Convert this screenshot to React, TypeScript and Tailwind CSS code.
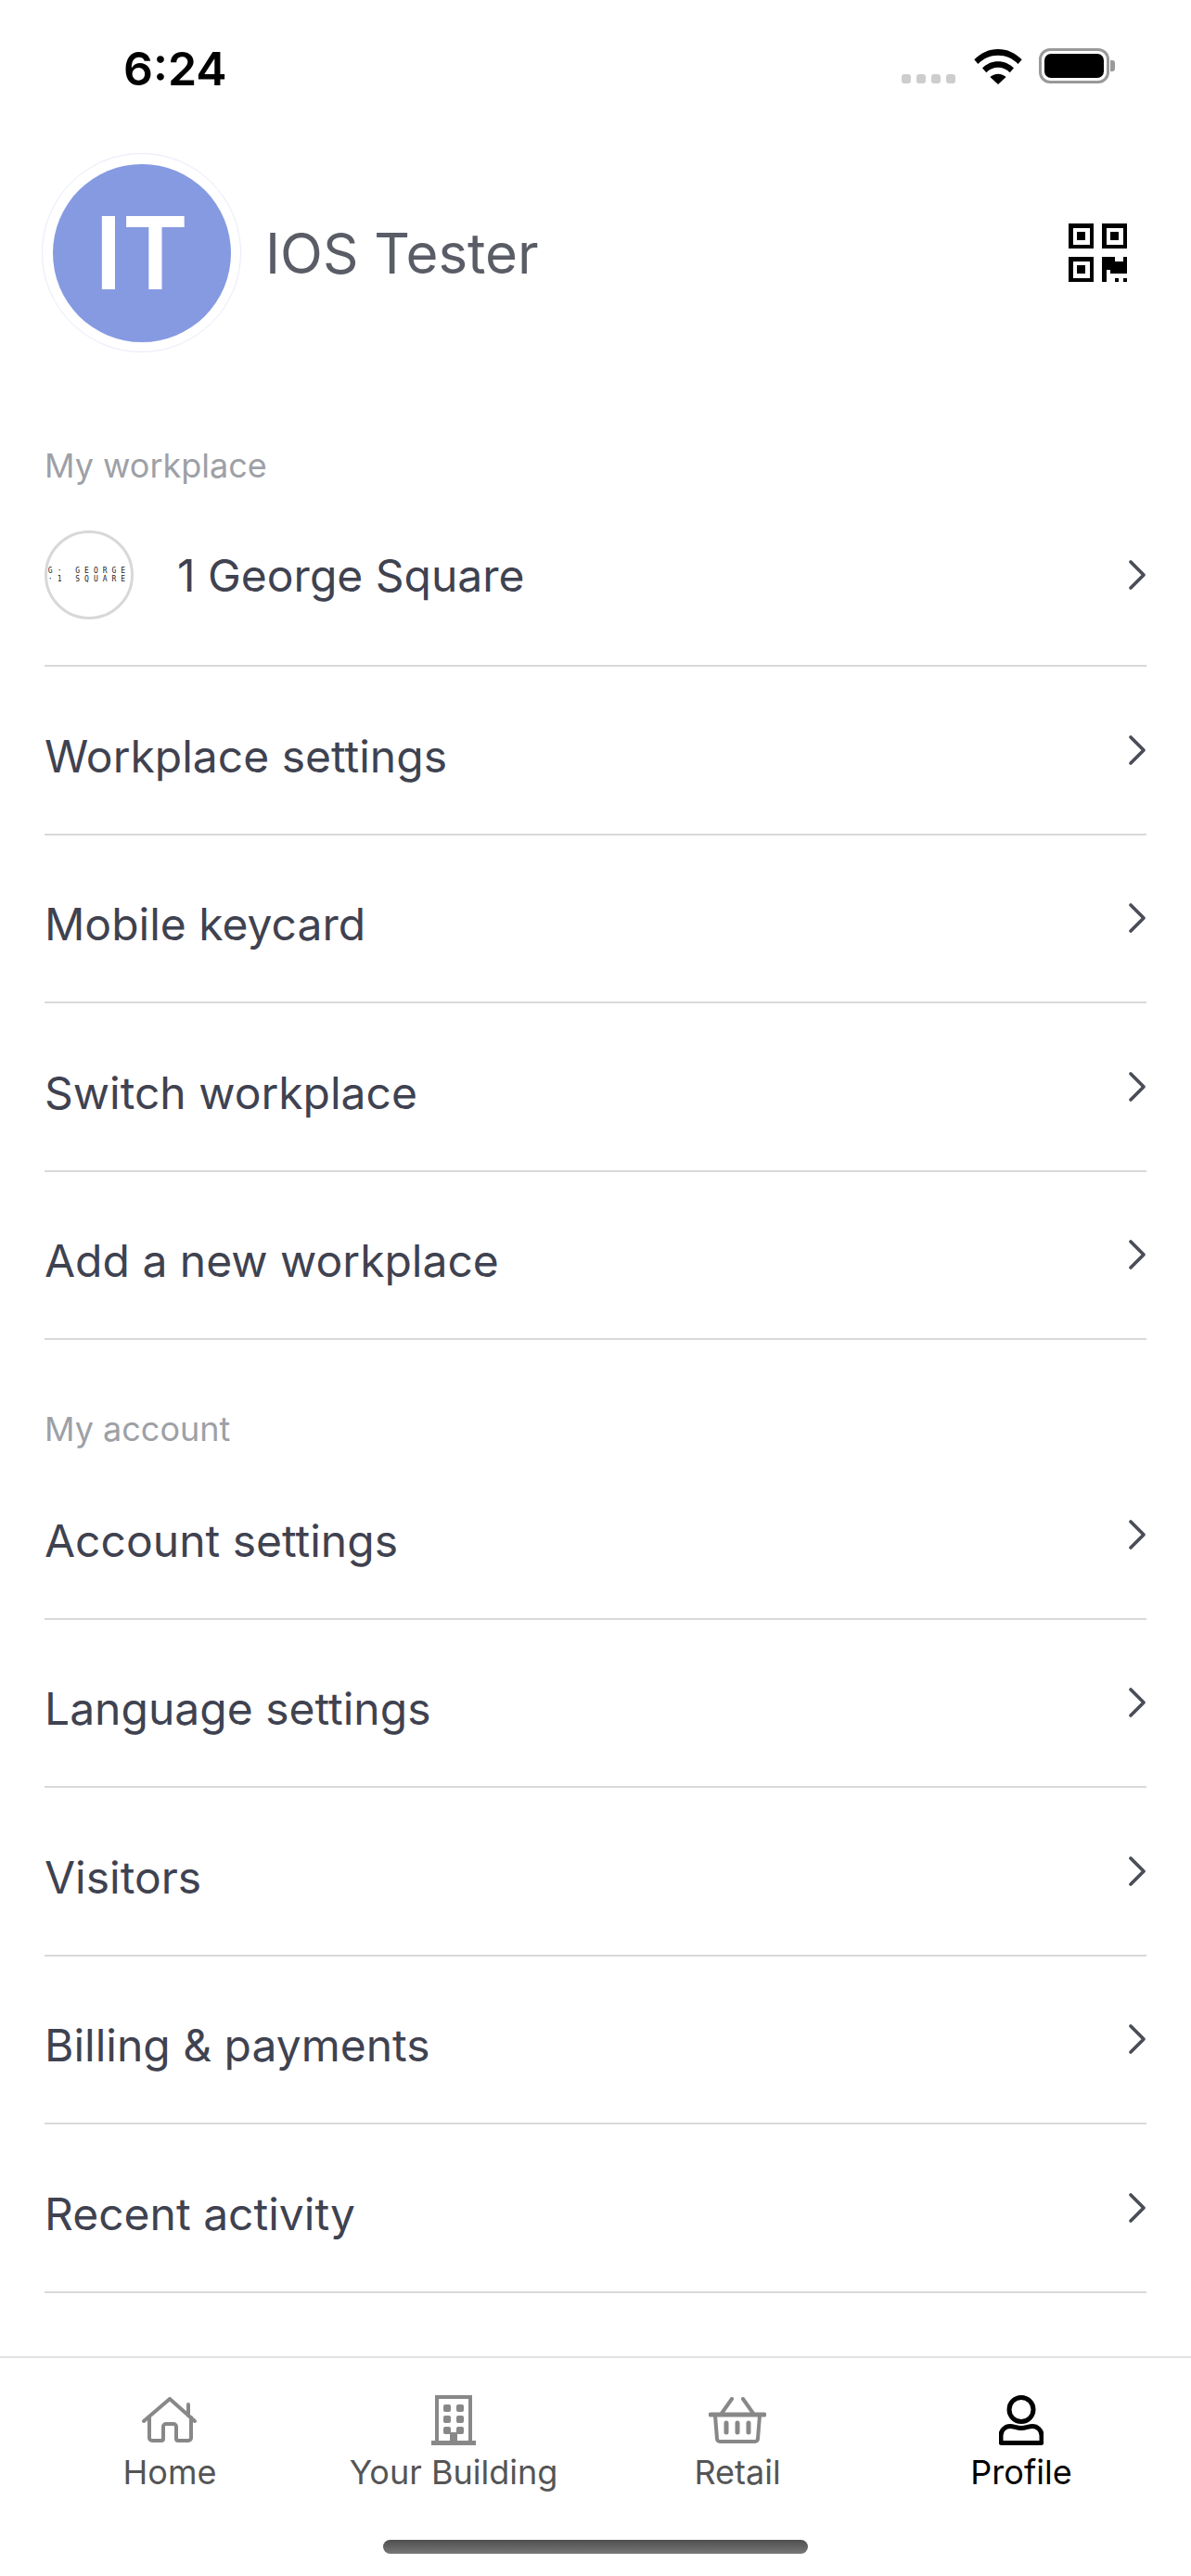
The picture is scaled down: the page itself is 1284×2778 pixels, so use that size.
import { ChevronRight } from 'lucide-react';

const workplaceRows = ['Workplace settings', 'Mobile keycard', 'Switch workplace', 'Add a new workplace'];
const accountRows = ['Account settings', 'Language settings', 'Visitors', 'Billing & payments', 'Recent activity'];

function Row({ label }: { label: string }) {
  return (
    <div className="flex h-[181.5px] items-center justify-between border-b-2 border-[#d9d9d9]">
      <span className="pt-[14px] text-[48px] leading-[60px] text-[#3f4250]">{label}</span>
      <ChevronRight className="-mr-[18px] h-[56px] w-[56px] text-[#4b4e58]" strokeWidth={1.6} />
    </div>
  );
}

function QrIcon() {
  return (
    <svg viewBox="0 0 14 14" className="h-[63px] w-[63px]" fill="#000" shapeRendering="crispEdges">
      <path fillRule="evenodd" d="M0 0h6v6H0zM1 1v4h4V1zM2 2h2v2H2z" />
      <path fillRule="evenodd" d="M8 0h6v6H8zM9 1v4h4V1zM10 2h2v2h-2z" />
      <path fillRule="evenodd" d="M0 8h6v6H0zM1 9v4h4V9zM2 10h2v2H2z" />
      <path d="M8 8h3v1h2V8h1v4h-4v-1H9v3H8z" />
      <path d="M11 13h1v1h-1zM13 13h1v1h-1z" />
    </svg>
  );
}

function StatusBar() {
  return (
    <div className="flex h-[120px] items-start justify-between pl-[133px] pr-[82px] pt-[52px]">
      <span className="text-[50px] leading-[44px] font-semibold text-black">6:24</span>
      <div className="flex items-start">
        <div className="mt-[28px] flex gap-[6px]">
          <div className="h-[10px] w-[10px] rounded-[3px] bg-[#cdcdcd]" />
          <div className="h-[10px] w-[10px] rounded-[3px] bg-[#cdcdcd]" />
          <div className="h-[10px] w-[10px] rounded-[3px] bg-[#cdcdcd]" />
          <div className="h-[10px] w-[10px] rounded-[3px] bg-[#cdcdcd]" />
        </div>
        <svg viewBox="0 0 50 37" className="ml-[20px] mt-[1px] h-[38px] w-[52px]" fill="#000">
          <path d="M25 0C15.500 0 7 3.800 0 11l4 4.500C10 9.500 17 6.500 25 6.500s15 3 21 9l4-4.500C43 3.800 34.500 0 25 0z" />
          <path d="M25 13c-6.300 0-12 2.500-16.500 7l4.200 4.500c3.300-3.300 7.600-5.200 12.300-5.200s9 1.900 12.300 5.200l4.200-4.500C37 15.500 31.300 13 25 13z" />
          <path d="M25 26c-3.300 0-6.200 1.300-8.400 3.300L25 37l8.400-7.700C31.200 27.300 28.300 26 25 26z" />
        </svg>
        <div className="ml-[18px] flex items-center">
          <div className="h-[38px] w-[76px] rounded-[12px] border-[3px] border-[#999999] p-[3px]">
            <div className="h-full w-full rounded-[7px] bg-black" />
          </div>
          <div className="ml-[1px] h-[12px] w-[5px] rounded-r-[3px] bg-[#999999]" />
        </div>
      </div>
    </div>
  );
}

function TabItem({ label, active, children }: { label: string; active?: boolean; children: React.ReactNode }) {
  return (
    <div className="flex flex-col items-center">
      <div className="flex h-[56px] items-center justify-center">{children}</div>
      <span className={`mt-[6px] text-[36px] leading-[44px] ${active ? 'text-black' : 'text-[#555555]'}`}>{label}</span>
    </div>
  );
}

export default function App() {
  return (
    <div className="flex h-[2778px] w-[1284px] flex-col overflow-hidden bg-white font-['Inter',sans-serif]">
      <StatusBar />
      <div className="flex items-center justify-between pl-[45px] pr-[69px] pt-[45px]">
        <div className="flex items-center">
          <div className="flex h-[215px] w-[215px] items-center justify-center rounded-full border border-[#e8ebfa]">
            <div className="flex h-[192px] w-[192px] items-center justify-center rounded-full bg-[#869ae2] text-[108px] font-semibold text-white">
              IT
            </div>
          </div>
          <span className="ml-[26px] text-[60px] leading-[72px] text-[#5a5d66]">IOS Tester</span>
        </div>
        <QrIcon />
      </div>

      <div className="px-[48px]">
        <div className="mt-[100px] text-[36px] leading-[44px] text-[#9ea0a6]">My workplace</div>
        <div className="flex h-[195px] items-center justify-between border-b-2 border-[#d9d9d9] pb-[2px]">
          <div className="flex items-center">
            <div className="flex h-[96px] w-[96px] flex-col items-center justify-center overflow-hidden rounded-full border-[3px] border-[#d8d8d8] font-['DejaVu_Sans_Mono',monospace] text-[8px] leading-[9px] tracking-[5px] whitespace-nowrap text-[#222222]">
              <span>G· GEORGE</span>
              <span>·1 SQUARE</span>
            </div>
            <span className="ml-[47px] pt-[3px] text-[48px] leading-[60px] text-[#3f4250]">1 George Square</span>
          </div>
          <ChevronRight className="-mr-[18px] h-[56px] w-[56px] text-[#4b4e58]" strokeWidth={1.6} />
        </div>
        {workplaceRows.map((label) => (
          <Row key={label} label={label} />
        ))}

        <div className="mt-[74px] text-[36px] leading-[44px] text-[#9ea0a6]">My account</div>
        <div className="mt-[2px]">
          {accountRows.map((label) => (
            <Row key={label} label={label} />
          ))}
        </div>
      </div>

      <div className="mt-auto h-[237px] border-t-2 border-[#e2e2e2]">
        <div className="grid grid-cols-4 px-[30px] pt-[39px]">
          <TabItem label="Home">
            <svg viewBox="0 0 60 50" className="h-[50px] w-[60px]" fill="none" stroke="#888888" strokeWidth="4" strokeLinecap="round" strokeLinejoin="round">
              <path d="M2 26 30 2l27 24" />
              <path d="M50 8v12" />
              <path d="M8 22v22a3 3 0 0 0 3 3h10a2 2 0 0 0 2-2V32a3 3 0 0 1 3-3h8a3 3 0 0 1 3 3v13a2 2 0 0 0 2 2h11a3 3 0 0 0 3-3V22" />
            </svg>
          </TabItem>
          <TabItem label="Your Building">
            <svg viewBox="0 0 48 54" className="h-[54px] w-[48px]" fill="#888888">
              <path fillRule="evenodd" d="M4 0h40v49h4v5H0v-5h4zM8 4v45h12v-9h8v9h12V4z" />
              <rect x="13" y="10" width="8" height="8" rx="2" />
              <rect x="27" y="10" width="8" height="8" rx="2" />
              <rect x="13" y="22" width="8" height="8" rx="2" />
              <rect x="27" y="22" width="8" height="8" rx="2" />
              <rect x="13" y="34" width="8" height="8" rx="2" />
              <rect x="27" y="34" width="8" height="8" rx="2" />
            </svg>
          </TabItem>
          <TabItem label="Retail">
            <svg viewBox="0 0 62 50" className="h-[50px] w-[62px]" fill="none" stroke="#888888" strokeWidth="4" strokeLinecap="round" strokeLinejoin="round">
              <path d="M2 19h58" strokeWidth="5" />
              <path d="M7 20l2 25a3 3 0 0 0 3 3h38a3 3 0 0 0 3-3l2-25" />
              <path d="M13 19 25 2M49 19 37 2" />
              <path d="M19 28v10M31 28v10M43 28v10" strokeWidth="5" />
            </svg>
          </TabItem>
          <TabItem label="Profile" active>
            <svg viewBox="0 0 48 54" className="h-[54px] w-[48px]" fill="none" stroke="#000000" strokeWidth="5" strokeLinecap="round" strokeLinejoin="round">
              <ellipse cx="24" cy="15.500" rx="13" ry="13" />
              <path d="M3 51.500h42a1 1 0 0 0 1-1v-7c0-6-5-10-10-10-4 0-7 2-12 2s-8-2-12-2c-5 0-10 4-10 10v7a1 1 0 0 0 1 1z" />
            </svg>
          </TabItem>
        </div>
        <div className="mx-auto mt-[51px] h-[15px] w-[458px] rounded-full bg-gradient-to-b from-[#4f4f4f] to-[#777777]" />
      </div>
    </div>
  );
}
